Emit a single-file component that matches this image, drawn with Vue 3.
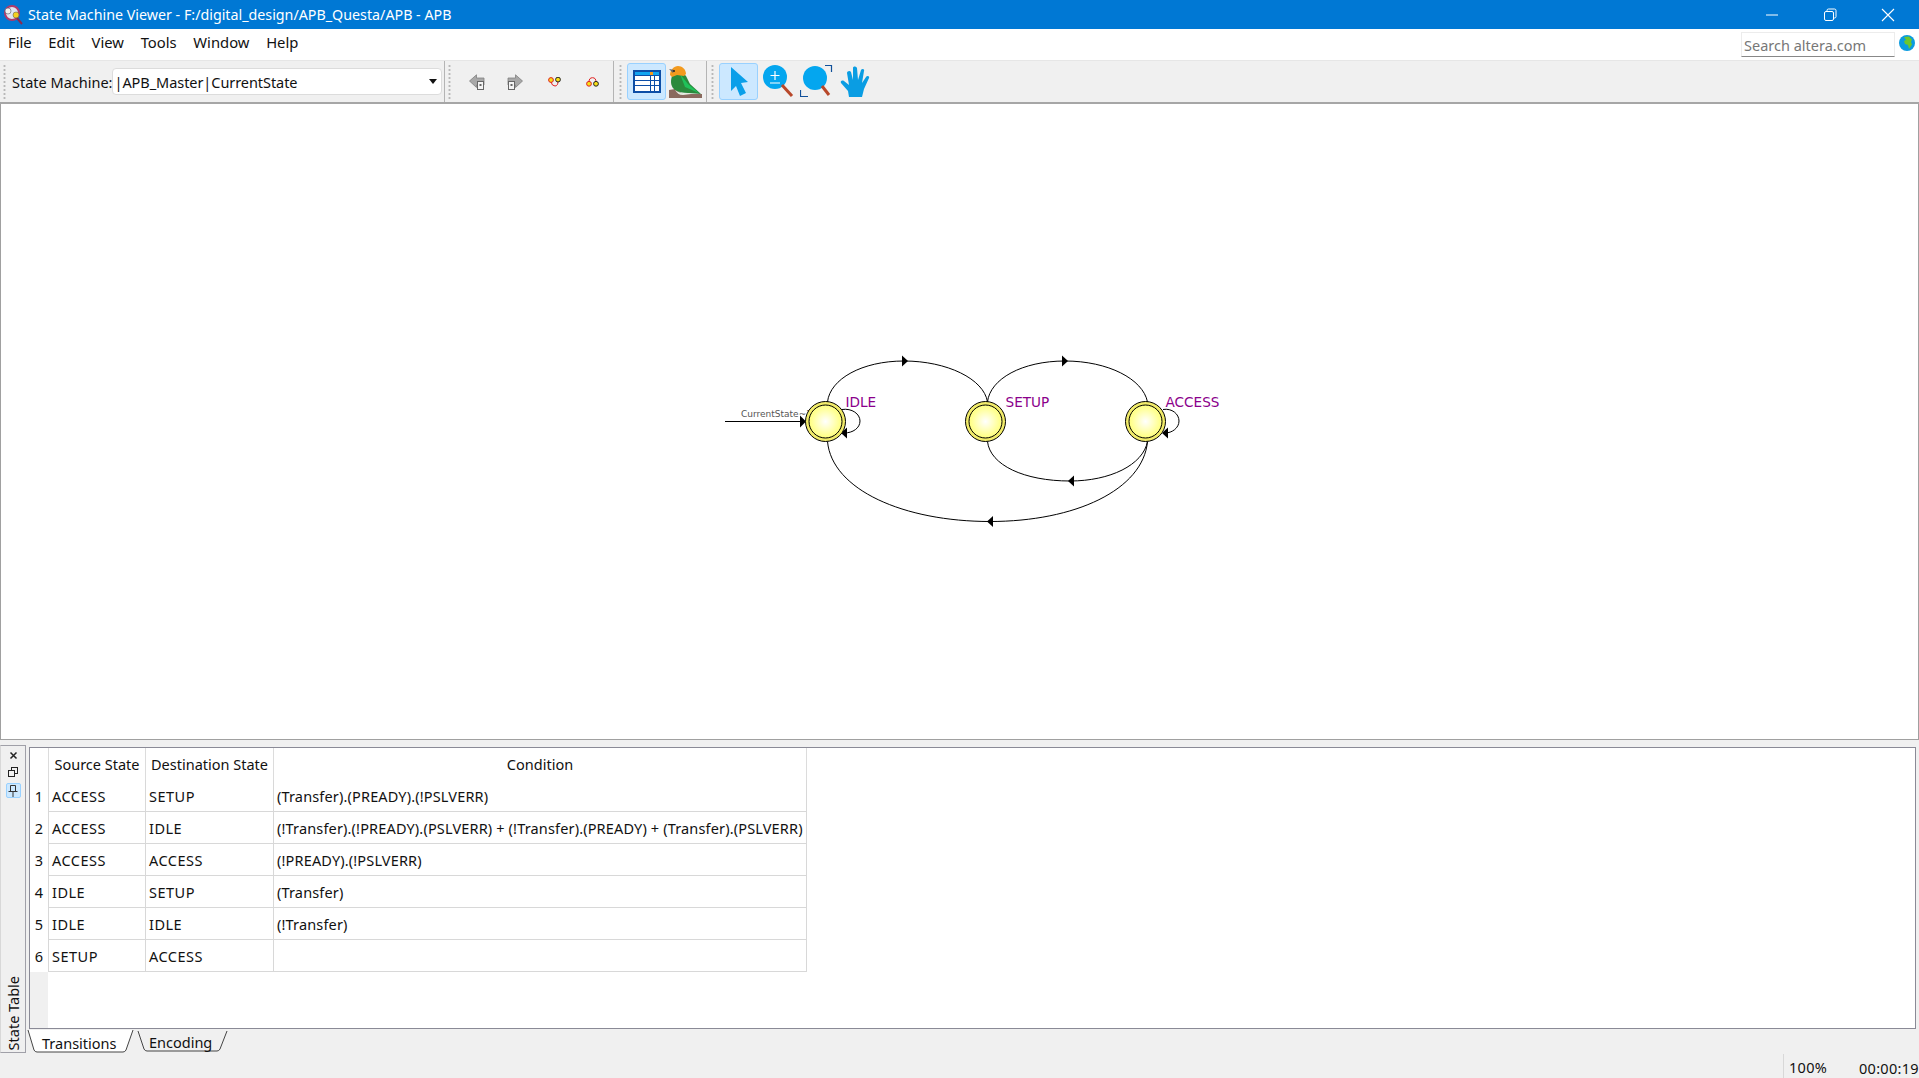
<template>
  <div class="window">
    <header class="titlebar">
      <svg class="appicon" width="20" height="22" viewBox="0 0 20 22">
        <circle cx="9" cy="9" r="7" fill="#dfe6f2" stroke="#b03a6a" stroke-width="2" />
        <line x1="14" y1="14" x2="19" y2="20" stroke="#8a2a50" stroke-width="2" />
        <circle cx="5" cy="7" r="3" fill="#f0f0f0" stroke="#556" stroke-width="0.6" />
        <circle cx="13" cy="11" r="3" fill="#f5d020" stroke="#665" stroke-width="0.6" />
      </svg>
      <span class="title">State Machine Viewer - F:/digital_design/APB_Questa/APB - APB</span>
      <div class="winbtns">
        <svg width="14" height="14" viewBox="0 0 14 14"><line x1="1" y1="7" x2="13" y2="7" stroke="#fff" /></svg>
        <svg width="14" height="14" viewBox="0 0 14 14" fill="none" stroke="#fff">
          <rect x="1.5" y="3.5" width="9" height="9" rx="1.5" />
          <path d="M4 3V2.5a1.5 1.5 0 0 1 1.5-1.5h6A1.5 1.5 0 0 1 13 2.500v6A1.5 1.5 0 0 1 11.500 10H11" />
        </svg>
        <svg width="14" height="14" viewBox="0 0 14 14"><path d="M1 1L13 13M13 1L1 13" stroke="#fff" stroke-width="1.100" /></svg>
      </div>
    </header>

    <nav class="menubar">
      <span v-for="m in menus" :key="m" class="menu">{{ m }}</span>
      <div class="search">Search altera.com</div>
      <svg class="globe" width="16" height="16" viewBox="0 0 16 16">
        <circle cx="8" cy="8" r="8" fill="#0a9be0" />
        <path d="M5 2l5-.5 3 3-1 2.500 1 2.500-3 4.500-1-4-3-1-1-3 2-1z" fill="#6cc62c" />
      </svg>
    </nav>

    <div class="toolbar">
      <div class="group statebar">
        <i class="grip"></i>
        <label>State Machine:</label>
        <div class="combo">
          <span>|APB_Master|CurrentState</span>
          <b class="caret"></b>
        </div>
      </div>
      <div class="group navgroup">
        <i class="grip"></i>
        <svg class="ti" width="16" height="16" viewBox="0 0 16 16">
          <path d="M.5 7L7.500 .8V4H15v7H7.500v2.500z" fill="#a8a8a8" stroke="#808080" stroke-width="0.8" />
          <rect x="8.500" y="7.500" width="6" height="8" fill="#f4f4f4" stroke="#666" />
          <rect x="10.500" y="10" width="2" height="2" fill="#666" />
        </svg>
        <svg class="ti" width="16" height="16" viewBox="0 0 16 16">
          <path d="M15.500 7L8.500 .8V4H1v7h7.500v2.500z" fill="#a8a8a8" stroke="#808080" stroke-width="0.8" />
          <rect x="1.500" y="7.500" width="6" height="8" fill="#f4f4f4" stroke="#666" />
          <rect x="3.500" y="10" width="2" height="2" fill="#666" />
        </svg>
        <svg class="ti" width="14" height="10" viewBox="0 0 14 10">
          <path d="M3 5Q4 9 7 9T10 4" fill="none" stroke="#e02020" />
          <circle cx="3" cy="3" r="2.400" fill="#f7e017" stroke="#e02020" />
          <circle cx="10" cy="2.600" r="2.400" fill="#f7e017" stroke="#222" />
        </svg>
        <svg class="ti" width="14" height="10" viewBox="0 0 14 10">
          <path d="M3 5Q3 .7 6.500 .7T10 5" fill="none" stroke="#e02020" />
          <circle cx="3" cy="6.800" r="2.400" fill="#f7e017" stroke="#e02020" />
          <circle cx="10" cy="6.800" r="2.400" fill="#f7e017" stroke="#222" />
        </svg>
      </div>
      <div class="group viewgroup">
        <i class="grip"></i>
        <button class="tbtn">
          <svg width="28" height="23" viewBox="0 0 28 23">
            <rect x="0" y="0" width="28" height="23" fill="#0d4ea6" />
            <rect x="2" y="2" width="24" height="3" fill="#12a5f0" />
            <rect x="17" y="2" width="3" height="3" fill="#f59a1b" />
            <rect x="2" y="6" width="15" height="4" fill="#fff" />
            <rect x="2" y="11" width="15" height="4" fill="#fff" />
            <rect x="2" y="16" width="15" height="5" fill="#fff" />
            <rect x="18" y="6" width="3" height="4" fill="#fff" />
            <rect x="18" y="11" width="3" height="4" fill="#fff" />
            <rect x="18" y="16" width="3" height="5" fill="#fff" />
            <rect x="22" y="6" width="4" height="4" fill="#fff" />
            <rect x="22" y="11" width="4" height="4" fill="#fff" />
            <rect x="22" y="16" width="4" height="5" fill="#fff" />
          </svg>
        </button>
        <svg class="bird" width="33" height="32" viewBox="0 0 33 32">
          <path d="M0 32V24l6-1 8 5h19v4z" fill="#8a6a5e" />
          <path d="M3 10C1 16 2 21 6 24c3 2 8 3 13 3l13 1-11-10-4-8-4-4z" fill="#2a8a3c" />
          <path d="M11 8l8 10 11 9-14-6z" fill="#1fc25a" />
          <path d="M6 24c4 3 9 4 13 3l3 1-8 1c-4 0-6-2-8-5z" fill="#e4ece0" />
          <path d="M1 9C1 4 5 0 9 0s8 3 8 8l-2 2-7-1-5 2z" fill="#f39a1e" />
          <path d="M0 3l5 1-1 3z" fill="#666" />
          <circle cx="5" cy="5" r="1" fill="#222" />
        </svg>
      </div>
      <div class="group toolgroup">
        <i class="grip"></i>
        <button class="tbtn">
          <svg width="20" height="30" viewBox="0 0 20 30">
            <path d="M2 0L19 15l-7 1 5 10-6 3-4-10-5 5z" fill="#0a9fe9" />
          </svg>
        </button>
        <svg class="ti zoomi" width="31" height="33" viewBox="0 0 31 33">
          <circle cx="12" cy="12" r="12" fill="#04a6ef" />
          <path d="M12 6v9M7.500 10.500h9M7 18h10" stroke="#fff" stroke-width="1.200" fill="none" />
          <line x1="19" y1="20" x2="29" y2="31" stroke="#b8482a" stroke-width="3" />
        </svg>
        <svg class="ti zoomr" width="33" height="33" viewBox="0 0 33 33">
          <circle cx="15" cy="13" r="12" fill="#04a6ef" />
          <line x1="22" y1="21" x2="29" y2="30" stroke="#b8482a" stroke-width="3" />
          <path d="M25 .500h6.500V7M.500 25v6.500H8" fill="none" stroke="#10509a" stroke-width="1.200" />
        </svg>
        <svg class="ti hand" width="30" height="32" viewBox="0 0 30 32">
          <path d="M9 31L8 25 1 17c-1-2 1-3 3-2l5 4-2-12c0-2 3-3 4-1l2 8 0-12c0-2 3-2 4 0l1 12 3-10c1-2 4-1 3 1l-2 12 4-6c1-2 4-1 3 1l-5 11-2 8z" fill="#0a9de3" />
        </svg>
      </div>
    </div>

    <main class="canvas">
      <svg width="1917" height="635" viewBox="1 105 1917 635">
        <defs>
          <radialGradient id="glow" cx="50%" cy="50%" r="55%">
            <stop offset="0%" stop-color="#ffffff" />
            <stop offset="100%" stop-color="#ffff70" />
          </radialGradient>
        </defs>
        <g fill="none" stroke="#000" stroke-width="1">
          <line x1="725" y1="422.500" x2="801" y2="422.500" stroke-width="1.200" />
          <path d="M827.500 403C830 380 862 362 904 362C947 362 984 380 987.500 403" />
          <path d="M987.500 403C990 380 1022 362 1065 362C1108 362 1143 380 1147.500 403" />
          <path d="M987.500 442.500C990 466 1024 482 1070 482C1110 482 1143 466 1147.500 442.500" />
          <path d="M827.500 442.500C832 491 904 522.500 990 522.500C1075 522.500 1143 491 1147.500 442.500" />
          <path d="M842 410.500C852 409 860 415 860 422C860 429 853 434 844 434" />
          <path d="M1163 410.500C1172 409 1179 415 1179 422C1179 429 1172 434 1165 434" />
        </g>
        <g fill="#000">
          <polygon points="902,356.500 908,362 902,367.500" />
          <polygon points="1062,356.500 1068,362 1062,367.500" />
          <polygon points="1074,476.500 1068,482 1074,487.500" />
          <polygon points="993,517 987,522.500 993,528" />
          <polygon points="800,416.500 806,422.500 800,428.500" />
          <polygon points="841,434 847,428.500 847,439.500" />
          <polygon points="1162,434 1168,428.500 1168,439.500" />
        </g>
        <text x="741" y="418" class="wire">CurrentState~1</text>
        <g v-for="s in states" :key="s.name">
          <circle :cx="s.x" cy="422.500" r="20" fill="#f2ec6a" stroke="#000" />
          <circle :cx="s.x" cy="422.500" r="16.500" fill="url(#glow)" stroke="#000" />
          <text :x="s.x + 20" y="407.500" class="state">{{ s.name }}</text>
        </g>
      </svg>
    </main>

    <section class="panel">
      <aside class="dock">
        <svg width="9" height="9" viewBox="0 0 9 9" class="dk"><path d="M1.500 1.500l6 6M7.500 1.500l-6 6" stroke="#222" stroke-width="1.500" /></svg>
        <svg width="10" height="10" viewBox="0 0 10 10" class="dk" fill="#f0f0f0" stroke="#222">
          <rect x="3.500" y=".5" width="6" height="6" />
          <rect x=".5" y="3.500" width="6" height="6" />
        </svg>
        <div class="pin">
          <svg width="10" height="12" viewBox="0 0 10 12" fill="none" stroke="#333">
            <path d="M2.500 .5h5v6h-5zM.5 6.500h9M5 7v5" />
          </svg>
        </div>
        <span class="docklabel">State Table</span>
      </aside>
      <div class="tablewrap">
        <div class="frame">
          <table>
            <thead>
              <tr>
                <th class="num"></th>
                <th class="src">Source State</th>
                <th class="dst">Destination State</th>
                <th class="cond">Condition</th>
              </tr>
            </thead>
            <tbody>
              <tr v-for="(r, i) in rows" :key="i">
                <td class="num">{{ i + 1 }}</td>
                <td class="caps">{{ r[0] }}</td>
                <td class="caps">{{ r[1] }}</td>
                <td class="expr">{{ r[2] }}</td>
              </tr>
            </tbody>
          </table>
          <div class="filler"></div>
        </div>
        <div class="tabs">
          <div class="tab active">
            <svg width="108" height="23" viewBox="0 0 108 23"><path d="M1 0L7 20Q8 22 10 22H96Q98 22 99 20L106 0" fill="#fff" stroke="#444" /></svg>
            <span>Transitions</span>
          </div>
          <div class="tab second">
            <svg width="94" height="23" viewBox="0 0 94 23"><path d="M1 1L7 19Q8 21 10 21H80Q82 21 83 19L90 1" fill="#f0f0f0" stroke="#444" /></svg>
            <span>Encoding</span>
          </div>
        </div>
      </div>
    </section>

    <footer class="statusbar">
      <span class="pct">100%</span>
      <span class="time">00:00:19</span>
    </footer>
  </div>
</template>

<script setup>
const menus = ['File', 'Edit', 'View', 'Tools', 'Window', 'Help']

const states = [
  { name: 'IDLE', x: 825.5 },
  { name: 'SETUP', x: 985.5 },
  { name: 'ACCESS', x: 1145.5 },
]

const rows = [
  ['ACCESS', 'SETUP', '(Transfer).(PREADY).(!PSLVERR)'],
  ['ACCESS', 'IDLE', '(!Transfer).(!PREADY).(PSLVERR) + (!Transfer).(PREADY) + (Transfer).(PSLVERR)'],
  ['ACCESS', 'ACCESS', '(!PREADY).(!PSLVERR)'],
  ['IDLE', 'SETUP', '(Transfer)'],
  ['IDLE', 'IDLE', '(!Transfer)'],
  ['SETUP', 'ACCESS', ''],
]
</script>

<style>
html, body { margin: 0; background: #f0f0f0; overflow: hidden; }
</style>

<style scoped>
.window {
  width: 1919px;
  height: 1078px;
  display: flex;
  flex-direction: column;
  font-family: "Noto Sans", "Open Sans", sans-serif;
  font-size: 14px;
  color: #111;
  background: #f0f0f0;
  overflow: hidden;
}

.titlebar {
  height: 29px;
  flex: none;
  background: #0078d4;
  color: #fff;
  display: flex;
  align-items: center;
  padding-left: 3px;
}
.appicon { margin-right: 5px; }
.title { font-size: 14.270px; }
.winbtns {
  margin-left: auto;
  display: flex;
  gap: 44px;
  padding-right: 24px;
}

.menubar {
  height: 32px;
  flex: none;
  background: #fff;
  display: flex;
  align-items: center;
  padding-left: 8px;
  gap: 16.700px;
  box-sizing: border-box;
  border-bottom: 1px solid #e6e6e6;
}
.menu { font-size: 14.800px; margin-bottom: 5px; }
.search {
  margin-left: auto;
  width: 154px;
  height: 25px;
  box-sizing: border-box;
  border: 1px solid #ececec;
  border-bottom: 1px solid #888;
  color: #777;
  font-size: 14.500px;
  line-height: 25px;
  padding-left: 2px;
  overflow: hidden;
  white-space: nowrap;
}
.globe { margin: 0 4px 3px -12.700px; }

.toolbar {
  height: 43px;
  flex: none;
  display: flex;
  align-items: stretch;
  box-sizing: border-box;
  border-bottom: 2px solid #a6a6a6;
  background: #f0f0f0;
}
.group {
  display: flex;
  align-items: center;
  border-right: 1px solid #b4b4b4;
  position: relative;
}
.grip {
  width: 3px;
  align-self: stretch;
  margin: 3px 0;
  background-image: radial-gradient(circle, #b8b8b8 1px, transparent 1.200px);
  background-size: 3px 4px;
  flex: none;
}
.statebar { width: 445px; padding-left: 3px; box-sizing: border-box; }
.statebar label { margin-left: 6px; font-size: 14.500px; white-space: nowrap; }
.combo {
  width: 330px;
  height: 27px;
  box-sizing: border-box;
  background: #fff;
  border: 1px solid #dcdcdc;
  border-radius: 4px;
  display: flex;
  align-items: center;
  padding-left: 1px;
  font-size: 14.500px;
  letter-spacing: -0.06px;
}
.caret {
  margin-left: auto;
  margin-right: 4px;
  border: 4px solid transparent;
  border-top: 5px solid #111;
  border-bottom: 0;
}
.navgroup { width: 169px; padding-left: 3px; box-sizing: border-box; }
.navgroup .ti:nth-of-type(1) { margin-left: 18px; }
.navgroup .ti:nth-of-type(2) { margin-left: 22px; }
.navgroup .ti:nth-of-type(3) { margin-left: 25px; }
.navgroup .ti:nth-of-type(4) { margin-left: 24px; }
.viewgroup { width: 93px; padding-left: 5px; box-sizing: border-box; }
.toolgroup { padding-left: 4px; border-right: none; }
.tbtn {
  width: 39px;
  height: 37px;
  padding: 0;
  margin-left: 5px;
  background: #cce8ff;
  border: 1px solid #99d1ff;
  border-radius: 3px;
  display: flex;
  align-items: center;
  justify-content: center;
}
.bird { margin-left: 3px; }
.zoomi { margin-left: 5px; }
.zoomr { margin-left: 6px; }
.hand { margin-left: 7px; }

.canvas {
  height: 636px;
  flex: none;
  background: #fff;
  box-sizing: border-box;
  border: 1px solid #a0a0a0;
  border-top: none;
  overflow: hidden;
}
.canvas svg { display: block; }
.wire {
  font-family: "DejaVu Sans", sans-serif;
  font-size: 9px;
  fill: #555;
}
.state {
  font-family: "DejaVu Sans", sans-serif;
  font-size: 13.600px;
  fill: #8b008b;
}

.panel {
  margin-top: 5px;
  height: 308px;
  flex: none;
  display: flex;
}
.dock {
  width: 26px;
  box-sizing: border-box;
  border: 1px solid #a0a0a8;
  border-left: 1px solid #d8d8d8;
  display: flex;
  flex-direction: column;
  align-items: center;
  padding-top: 5px;
}
.dk { margin-bottom: 7px; }
.pin {
  width: 15px;
  height: 15px;
  background: #cce8ff;
  border: 1px solid #99d1ff;
  border-radius: 2px;
  display: flex;
  justify-content: center;
  align-items: center;
  box-sizing: border-box;
  margin-top: -1px;
}
.docklabel {
  margin-top: auto;
  writing-mode: vertical-rl;
  transform: rotate(180deg);
  font-size: 14.500px;
  line-height: 18px;
  padding-top: 2px;
}
.tablewrap {
  flex: 1;
  margin-left: 3px;
  margin-right: 3px;
  padding-top: 2px;
  display: flex;
  flex-direction: column;
  min-width: 0;
}
.frame {
  height: 282px;
  flex: none;
  box-sizing: border-box;
  background: #fff;
  border: 1px solid #8a8a96;
  display: flex;
  flex-direction: column;
}
table {
  border-collapse: collapse;
  table-layout: fixed;
  width: 777px;
  font-size: 14.500px;
}
th {
  height: 32px;
  padding: 0;
  font-weight: 400;
  text-align: center;
  border-right: 1px solid #dcdcdc;
  white-space: nowrap;
}
td {
  height: 31px;
  padding: 0 2px 0 3px;
  border-right: 1px solid #d8d8d8;
  border-bottom: 1px solid #d8d8d8;
  white-space: nowrap;
  overflow: hidden;
}
td.caps { letter-spacing: 0.5px; }
td.expr { letter-spacing: 0.155px; }
.num { width: 18px; padding: 0; text-align: center; }
td.num { border-bottom: none; }
.src { width: 96px; }
.dst { width: 127px; }
.filler {
  flex: 1;
  width: 18px;
  background: #f0f0f0;
}
.tabs {
  display: flex;
  height: 24px;
  font-size: 14.500px;
  margin-top: 1px;
}
.tab {
  position: relative;
  height: 23px;
}
.tab svg { position: absolute; left: 0; top: 0; }
.tab span { position: absolute; white-space: nowrap; top: 3px; }
.tab.active { width: 108px; margin-left: -2px; }
.tab.active span { left: 15px; }
.tab.second { width: 94px; margin-left: 2px; }
.tab.second span { left: 12px; top: 2px; }

.statusbar {
  flex: 1;
  position: relative;
  display: flex;
  justify-content: flex-end;
  align-items: flex-end;
  font-size: 14.500px;
  line-height: 20px;
}
.pct {
  border-left: 1px solid #d8d8d8;
  padding-left: 5px;
  padding-top: 3px;
  box-sizing: border-box;
  width: 76px;
  height: 24px;
  letter-spacing: 0.3px;
}
.time { width: 60px; height: 20px; white-space: nowrap; letter-spacing: 0.3px; }
</style>
